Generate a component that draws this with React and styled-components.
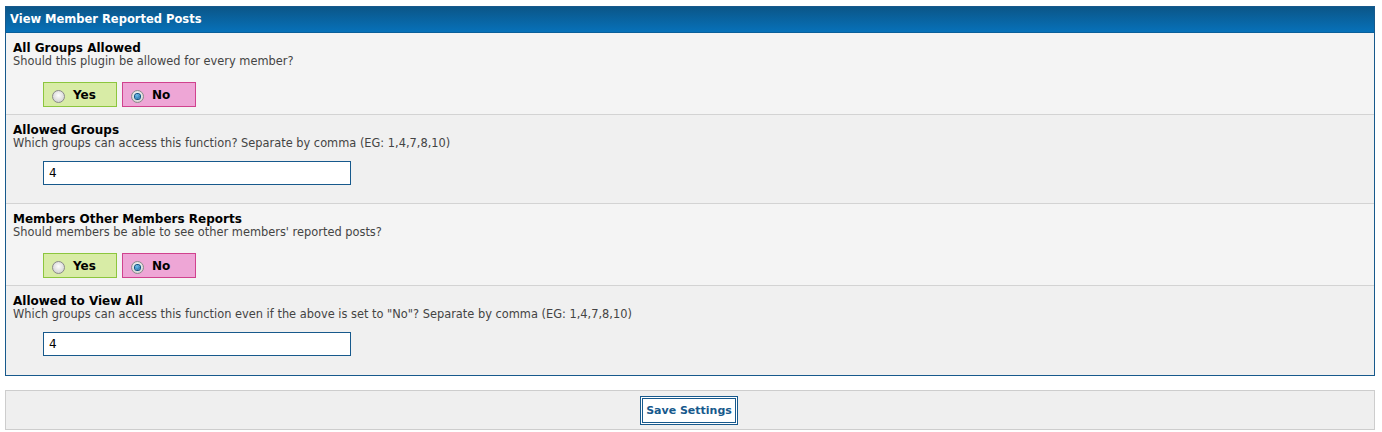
import React from "react";
import styled, { createGlobalStyle } from "styled-components";

const GlobalStyle = createGlobalStyle`
  body {
    margin: 0;
    padding: 6px 7px 0 5px;
    background: #fff;
    font-family: "DejaVu Sans", Verdana, sans-serif;
  }
`;

const Panel = styled.div`
  border: 1px solid #17598c;
  background: #f4f4f4;
`;

const Header = styled.div`
  height: 25px;
  background: linear-gradient(to bottom, #0b5688, #0771b9);
  color: #fff;
  font-weight: bold;
  font-size: 11.5px;
  line-height: 25px;
  padding-left: 4px;
  border-bottom: 1px solid #0a5f9a;
`;

const Row = styled.div`
  background: ${(p) => (p.$alt ? "#f0f0f0" : "#f4f4f4")};
  padding: 8px 7px ${(p) => p.$bottom}px;
  border-top: ${(p) => (p.$first ? "none" : "1px solid #d3d3d3")};
`;

const Title = styled.div`
  font-weight: bold;
  font-size: 12px;
  line-height: 14px;
  color: #000;
`;

const Desc = styled.div`
  font-size: 11.4px;
  line-height: 13px;
  color: #444;
`;

const Options = styled.div`
  display: flex;
  gap: 5px;
  margin: 14px 0 0 30px;
`;

const Option = styled.label`
  box-sizing: border-box;
  width: 74px;
  height: 25px;
  display: flex;
  align-items: center;
  padding-left: 8px;
  gap: 8px;
  font-size: 12px;
  font-weight: bold;
  color: #000;
  background: ${(p) => (p.$no ? "#eea6d6" : "#d8eca6")};
  border: 1px solid ${(p) => (p.$no ? "#d0428e" : "#8cc63e")};
`;

const Radio = styled.span`
  box-sizing: border-box;
  width: 13px;
  height: 13px;
  border-radius: 50%;
  margin-top: 3px;
  border: 1px solid #8a8a8a;
  background: radial-gradient(circle at 50% 40%, #fdfdfd, #c8c8c8);
  display: flex;
  align-items: center;
  justify-content: center;

  &::after {
    content: "";
    display: ${(p) => (p.$checked ? "block" : "none")};
    width: 5px;
    height: 5px;
    border-radius: 50%;
    background: radial-gradient(circle at 40% 35%, #6fc0ef, #0a5d96);
    box-shadow: 0 0 0 1px #0a4f80;
  }
`;

const TextInput = styled.input`
  box-sizing: border-box;
  display: block;
  width: 308px;
  height: 24px;
  margin: 11px 0 0 30px;
  padding: 0 5px;
  border: 1px solid #17598c;
  background: #fff;
  font-family: "DejaVu Sans", Verdana, sans-serif;
  font-size: 12px;
  color: #000;
  outline: none;
`;

const Footer = styled.div`
  margin-top: 14px;
  height: 38px;
  border: 1px solid #cdcdcd;
  background: #efefef;
  display: flex;
  align-items: center;
  justify-content: center;
`;

const SaveButton = styled.button`
  box-sizing: border-box;
  width: 98px;
  height: 29px;
  margin-left: -2px;
  background: #fff;
  border: 3px double #17598c;
  color: #17598c;
  font-family: "DejaVu Sans", Verdana, sans-serif;
  font-weight: bold;
  font-size: 11px;
  padding: 0;
  cursor: pointer;
`;

const YesNo = () => (
  <Options>
    <Option>
      <Radio />
      Yes
    </Option>
    <Option $no>
      <Radio $checked />
      No
    </Option>
  </Options>
);

const App = () => (
  <>
    <GlobalStyle />
    <Panel>
      <Header>View Member Reported Posts</Header>
      <Row $first $bottom={7}>
        <Title>All Groups Allowed</Title>
        <Desc>Should this plugin be allowed for every member?</Desc>
        <YesNo />
      </Row>
      <Row $alt $bottom={18}>
        <Title>Allowed Groups</Title>
        <Desc>Which groups can access this function? Separate by comma (EG: 1,4,7,8,10)</Desc>
        <TextInput defaultValue="4" />
      </Row>
      <Row $bottom={7}>
        <Title>Members Other Members Reports</Title>
        <Desc>Should members be able to see other members' reported posts?</Desc>
        <YesNo />
      </Row>
      <Row $alt $bottom={19}>
        <Title>Allowed to View All</Title>
        <Desc>
          Which groups can access this function even if the above is set to "No"? Separate by comma (EG: 1,4,7,8,10)
        </Desc>
        <TextInput defaultValue="4" />
      </Row>
    </Panel>
    <Footer>
      <SaveButton>Save Settings</SaveButton>
    </Footer>
  </>
);

export default App;
